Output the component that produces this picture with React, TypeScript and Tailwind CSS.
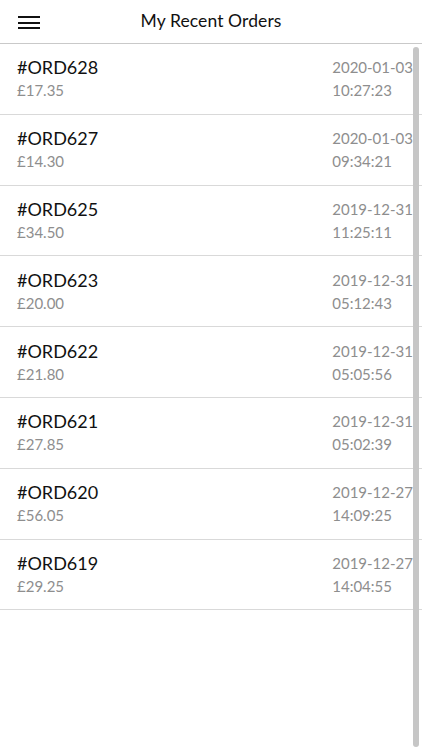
import React from "react";

const orders = [
  { id: "#ORD628", price: "£17.35", date: "2020-01-03", time: "10:27:23" },
  { id: "#ORD627", price: "£14.30", date: "2020-01-03", time: "09:34:21" },
  { id: "#ORD625", price: "£34.50", date: "2019-12-31", time: "11:25:11" },
  { id: "#ORD623", price: "£20.00", date: "2019-12-31", time: "05:12:43" },
  { id: "#ORD622", price: "£21.80", date: "2019-12-31", time: "05:05:56" },
  { id: "#ORD621", price: "£27.85", date: "2019-12-31", time: "05:02:39" },
  { id: "#ORD620", price: "£56.05", date: "2019-12-27", time: "14:09:25" },
  { id: "#ORD619", price: "£29.25", date: "2019-12-27", time: "14:04:55" },
];

const App = () => {
  return (
    <div
      className="relative w-[422px] h-[750px] overflow-hidden bg-white"
      style={{ fontFamily: "Lato, 'Noto Sans', sans-serif" }}
    >
      {/* Header */}
      <header className="relative h-[44px] flex items-center justify-center border-b border-[#c9c9c9]">
        <button className="absolute left-[18px] top-[16px] w-[22px] h-[13px] flex flex-col justify-between" aria-label="Menu">
          <span className="block h-[2px] w-full bg-[#111]" />
          <span className="block h-[2px] w-full bg-[#111]" />
          <span className="block h-[2px] w-full bg-[#111]" />
        </button>
        <h1 className="text-[17.5px] text-[#111] tracking-[0.1px]">My Recent Orders</h1>
      </header>

      {/* Orders list */}
      <ul>
        {orders.map((o) => (
          <li
            key={o.id}
            className="h-[70.8px] flex items-center justify-between pl-[17px] pr-[9px] border-b border-[#d9d9d9]"
          >
            <div className="flex flex-col pt-[1px]">
              <span className="text-[18px] leading-[23px] text-[#111]">{o.id}</span>
              <span className="text-[15px] leading-[23px] text-[#8e8e8e]">{o.price}</span>
            </div>
            <div className="flex flex-col text-left pt-[1px]">
              <span className="text-[15px] leading-[23px] text-[#8e8e8e]">{o.date}</span>
              <span className="text-[15px] leading-[23px] text-[#8e8e8e]">{o.time}</span>
            </div>
          </li>
        ))}
      </ul>

      {/* Scrollbar */}
      <div className="absolute left-[413px] top-[47px] w-[6px] h-[700px] rounded-full bg-[#c6c6c6]" />
    </div>
  );
};

export default App;
